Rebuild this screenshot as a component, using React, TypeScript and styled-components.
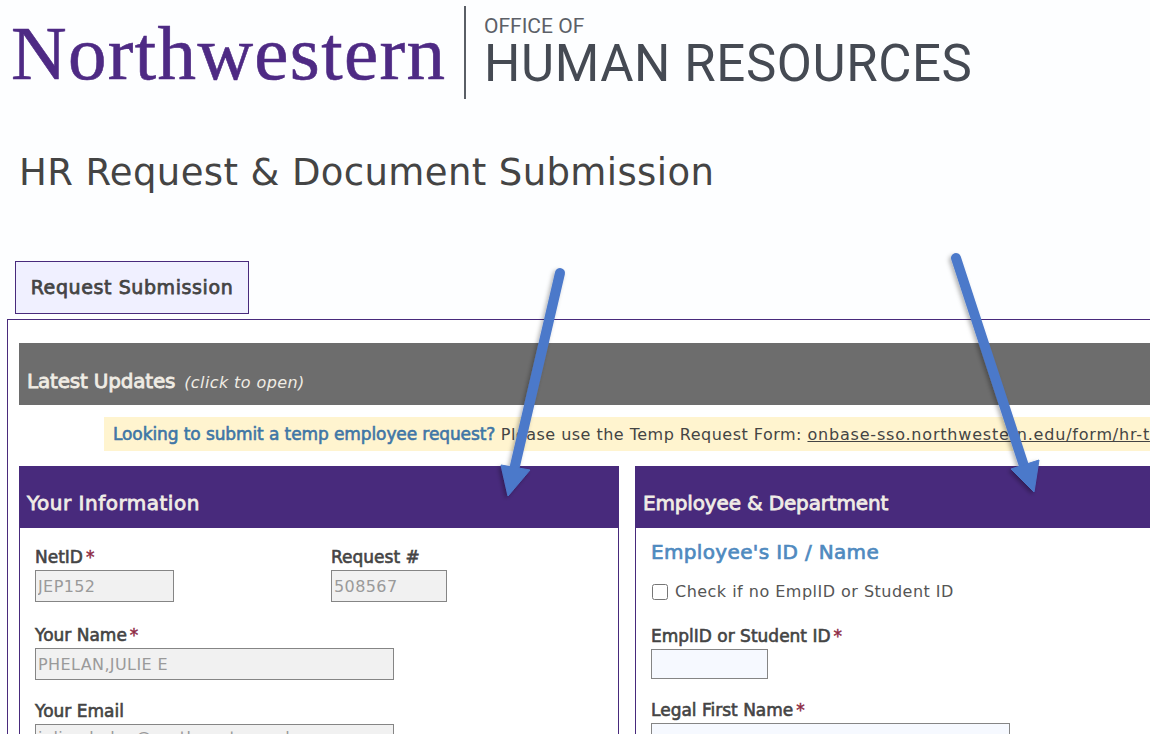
import React from "react";
import styled, { createGlobalStyle } from "styled-components";

const Global = createGlobalStyle`
  html, body { margin: 0; padding: 0; background: #fdfeff; }
  body { width: 1150px; height: 734px; overflow: hidden; font-family: "DejaVu Sans", sans-serif; color: #444; }
  #root { position: relative; width: 1150px; height: 734px; overflow: hidden; }
`;

const purple = "#482a7c";

const Brand = styled.header`
  display: flex;
  align-items: flex-start;
  height: 105px;
  padding: 6px 0 0 11px;
  box-sizing: border-box;
`;
const Wordmark = styled.div`
  font-family: "Liberation Serif", serif;
  font-size: 77px;
  line-height: 94px;
  color: #4e2a84;
  letter-spacing: 1.35px;
  -webkit-text-stroke: 0.6px #4e2a84;
  width: 453px;
  white-space: nowrap;
`;
const BrandRule = styled.div`
  width: 2px;
  height: 93px;
  background: #5a5f66;
  margin-right: 18px;
`;
const Office = styled.div`
  font-family: "Roboto", sans-serif;
  color: #454a53;
  display: flex;
  flex-direction: column;
`;
const OfficeSmall = styled.span`
  font-size: 21px;
  line-height: 26px;
  margin-top: 7px;
  color: #5c6068;
`;
const OfficeLarge = styled.span`
  font-size: 51px;
  line-height: 50px;
  letter-spacing: 0.6px;
  white-space: nowrap;
`;
const Title = styled.h1`
  margin: 43px 0 0 19px;
  font-size: 37px;
  line-height: 50px;
  font-weight: 400;
  letter-spacing: 0.38px;
  color: #444;
  white-space: nowrap;
`;
const Tab = styled.div`
  margin: 63px 0 0 15px;
  width: 234px;
  height: 53px;
  box-sizing: border-box;
  border: 1px solid ${purple};
  background: #f0f0ff;
  display: flex;
  align-items: center;
  justify-content: center;
  padding-bottom: 2px;
  font-size: 19px;
  -webkit-text-stroke: 0.75px #444;
  letter-spacing: 0.6px;
  color: #444;
  white-space: nowrap;
`;
const Panel = styled.main`
  margin: 5px 0 0 7px;
  width: 1400px;
  box-sizing: border-box;
  padding: 23px 11px 0;
  border: 1px solid ${purple};
  background: #fff;
`;
const Updates = styled.div`
  height: 62px;
  box-sizing: border-box;
  background: #6d6d6d;
  color: #f0ece4;
  padding: 24px 8px 0;
  display: flex;
  align-items: baseline;
  gap: 9px;
`;
const UpdatesTitle = styled.span`
  font-size: 20px;
  line-height: 28px;
  -webkit-text-stroke: 0.8px #f0ece4;
  letter-spacing: -0.2px;
`;
const UpdatesHint = styled.em`
  font-size: 16px;
  letter-spacing: 0.4px;
`;
const Notice = styled.div`
  margin: 12px 0 15px 85px;
  height: 34px;
  box-sizing: border-box;
  padding: 0 9px;
  background: #fff4cf;
  display: flex;
  align-items: center;
  white-space: pre;
  font-size: 16px;
  letter-spacing: 0.48px;
  color: #444;
`;
const NoticeLead = styled.span`
  color: #3f76a6;
  font-size: 17px;
  -webkit-text-stroke: 0.6px #3f76a6;
  letter-spacing: -0.1px;
`;
const NoticeLink = styled.a`
  color: #444;
  text-decoration: underline;
  letter-spacing: 0.8px;
`;
const Columns = styled.div`
  display: grid;
  grid-template-columns: 600px 600px;
  gap: 16px;
`;
const Card = styled.section`
  height: 400px;
  box-sizing: border-box;
  border: 1px solid ${purple};
`;
const CardHead = styled.h2<{ $track: number }>`
  margin: -1px -1px 0;
  height: 62px;
  box-sizing: border-box;
  background: ${purple};
  color: #f0ece6;
  padding: 22px 8px 0;
  font-size: 20px;
  line-height: 30px;
  font-weight: 400;
  -webkit-text-stroke: 0.8px #f0ece6;
  letter-spacing: ${(p) => p.$track}px;
`;
const CardBody = styled.div<{ $top: number }>`
  padding: ${(p) => p.$top}px 15px 0;
`;
const Pair = styled.div`
  display: grid;
  grid-template-columns: 296px 1fr;
  margin-bottom: 2px;
`;
const Field = styled.div`
  margin-bottom: 19px;
`;
const Label = styled.label`
  display: block;
  font-size: 17px;
  line-height: 25px;
  -webkit-text-stroke: 0.6px #444;
  color: #444;
  letter-spacing: 0;
  white-space: nowrap;
`;
const Star = styled.span`
  color: #8e2b45;
  -webkit-text-stroke: 0.45px #8e2b45;
  margin-left: 3px;
`;
const Input = styled.input<{ $w: number; $filled?: boolean; $raise?: number }>`
  display: block;
  width: ${(p) => p.$w}px;
  height: ${(p) => (p.$filled ? 30 : 32)}px;
  box-sizing: border-box;
  border: 1px solid #858585;
  border-radius: 0;
  padding: 0 2px ${(p) => p.$raise ?? 0}px;
  font: 16px "DejaVu Sans", sans-serif;
  letter-spacing: 0.4px;
  background: ${(p) => (p.$filled ? "#f6f9ff" : "#f1f1f1")};
  &:disabled { color: #9a9a9a; -webkit-text-fill-color: #9a9a9a; opacity: 1; }
`;
const SectionTitle = styled.h3`
  margin: 0 0 13px;
  font-size: 20px;
  line-height: 30px;
  font-weight: 400;
  -webkit-text-stroke: 0.7px #4f8abf;
  color: #4f8abf;
  letter-spacing: 0.35px;
`;
const CheckRow = styled.label`
  display: flex;
  align-items: center;
  gap: 7px;
  margin-bottom: 20px;
  font-size: 16px;
  line-height: 24px;
  color: #555;
  letter-spacing: 0.48px;
`;
const Check = styled.input`
  width: 16px;
  height: 16px;
  margin: 0 0 0 1px;
`;
const Overlay = styled.svg`
  position: absolute;
  inset: 0;
  pointer-events: none;
`;

export default function App() {
  return (
    <>
      <Global />
      <Brand>
        <Wordmark>Northwestern</Wordmark>
        <BrandRule />
        <Office>
          <OfficeSmall>OFFICE OF</OfficeSmall>
          <OfficeLarge>HUMAN RESOURCES</OfficeLarge>
        </Office>
      </Brand>
      <Title>HR Request &amp; Document Submission</Title>
      <Tab>Request Submission</Tab>
      <Panel>
        <Updates>
          <UpdatesTitle>Latest Updates</UpdatesTitle>
          <UpdatesHint>(click to open)</UpdatesHint>
        </Updates>
        <Notice>
          <NoticeLead>Looking to submit a temp employee request?</NoticeLead>
          {" Please use the Temp Request Form: "}
          <NoticeLink href="#">onbase-sso.northwestern.edu/form/hr-t</NoticeLink>
        </Notice>
        <Columns>
          <Card>
            <CardHead $track={0.5}>Your Information</CardHead>
            <CardBody $top={17}>
              <Pair>
                <Field>
                  <Label>NetID<Star>*</Star></Label>
                  <Input $w={139} disabled value="JEP152" readOnly />
                </Field>
                <Field>
                  <Label>Request #</Label>
                  <Input $w={116} disabled value="508567" readOnly />
                </Field>
              </Pair>
              <Field>
                <Label>Your Name<Star>*</Star></Label>
                <Input $w={359} disabled value="PHELAN,JULIE E" readOnly />
              </Field>
              <Field>
                <Label>Your Email</Label>
                <Input $w={359} $raise={6} disabled value="julie.phelan@northwestern.edu" readOnly />
              </Field>
            </CardBody>
          </Card>
          <Card>
            <CardHead $track={-0.15}>Employee &amp; Department</CardHead>
            <CardBody $top={9}>
              <SectionTitle>Employee's ID / Name</SectionTitle>
              <CheckRow>
                <Check type="checkbox" />
                Check if no EmplID or Student ID
              </CheckRow>
              <Field>
                <Label>EmplID or Student ID<Star>*</Star></Label>
                <Input $w={117} $filled />
              </Field>
              <Field>
                <Label>Legal First Name<Star>*</Star></Label>
                <Input $w={359} $filled />
              </Field>
            </CardBody>
          </Card>
        </Columns>
      </Panel>
      <Overlay width="1150" height="734" viewBox="0 0 1150 734">
        <defs>
          <filter id="arrowShadow" x="-30%" y="-10%" width="160%" height="120%">
            <feDropShadow dx="-2" dy="2" stdDeviation="2" floodColor="#000" floodOpacity="0.3" />
          </filter>
        </defs>
        <g filter="url(#arrowShadow)" fill="#4c79ca" stroke="#4c79ca">
          <path d="M560 273 L514 470" strokeWidth="10" strokeLinecap="round" fill="none" />
          <path d="M501 465 L530 470 L508 496 Z" strokeWidth="1" />
          <path d="M956 258 L1024 466" strokeWidth="10" strokeLinecap="round" fill="none" />
          <path d="M1011 469 L1039 460 L1034 492 Z" strokeWidth="1" />
        </g>
      </Overlay>
    </>
  );
}
